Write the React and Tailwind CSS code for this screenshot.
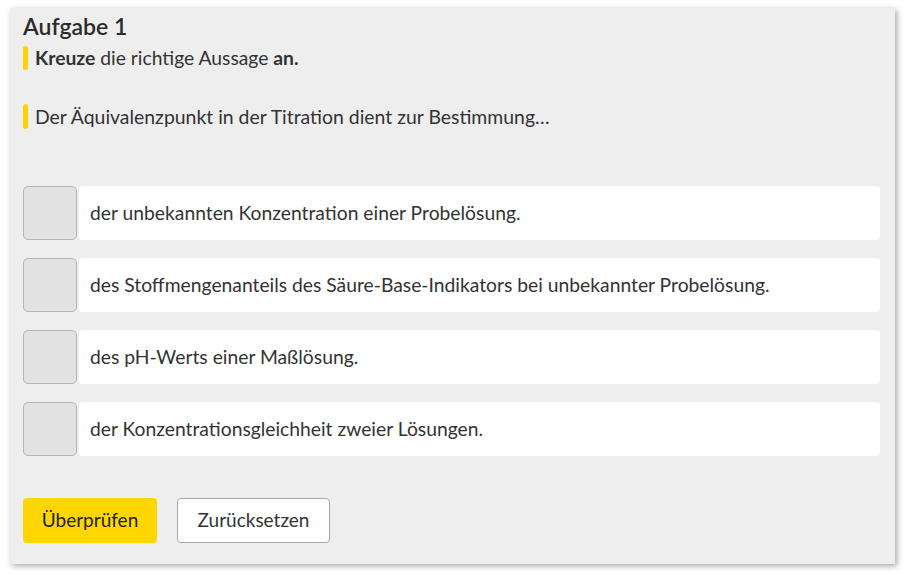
const options = [
  'der unbekannten Konzentration einer Probelösung.',
  'des Stoffmengenanteils des Säure-Base-Indikators bei unbekannter Probelösung.',
  'des pH-Werts einer Maßlösung.',
  'der Konzentrationsgleichheit zweier Lösungen.',
];

export default function App() {
  return (
    <div
      className="w-[911px] h-[574px] bg-white pl-[10px] pt-[8px]"
      style={{ fontFamily: 'Lato, "Open Sans", sans-serif' }}
    >
      <div className="w-[885px] h-[556px] bg-[#eeeeee] shadow-[2px_2px_6px_rgba(0,0,0,0.35)] pl-[13px] pr-[15px] pt-[4px] text-[#333333]">
        <h1 className="text-[23px] leading-[28px] font-semibold text-[#2b2b2b]">Aufgabe 1</h1>

        <div className="flex items-center gap-[7px] mt-[6px] h-[24px]">
          <span className="w-[5px] h-[24px] rounded-full bg-[#FFD200]"></span>
          <p className="text-[19.3px] leading-[24px]">
            <span className="font-bold">Kreuze</span> die richtige Aussage <span className="font-bold">an.</span>
          </p>
        </div>

        <div className="flex items-center gap-[7px] mt-[34px] h-[25px]">
          <span className="w-[5px] h-[25px] rounded-full bg-[#FFD200]"></span>
          <p className="text-[19.4px] leading-[24px]">Der Äquivalenzpunkt in der Titration dient zur Bestimmung…</p>
        </div>

        <div className="flex flex-col gap-[18px] mt-[57px]">
          {options.map((o) => (
            <div key={o} className="flex gap-[2px] h-[54px]">
              <div className="w-[54px] h-[54px] rounded-[5px] bg-[#e2e2e2] border border-[#b5b5b5]"></div>
              <div className="flex-1 bg-white rounded-[4px] flex items-center pl-[11px] text-[19.3px] text-[#333333]">
                {o}
              </div>
            </div>
          ))}
        </div>

        <div className="flex gap-[20px] mt-[42px]">
          <button className="w-[134px] h-[45px] rounded-[4px] bg-[#FFD600] text-[19px] text-[#222222]">
            Überprüfen
          </button>
          <button className="w-[153px] h-[45px] rounded-[4px] bg-white border border-[#a8a8a8] text-[19px] text-[#333333]">
            Zurücksetzen
          </button>
        </div>
      </div>
    </div>
  );
}
